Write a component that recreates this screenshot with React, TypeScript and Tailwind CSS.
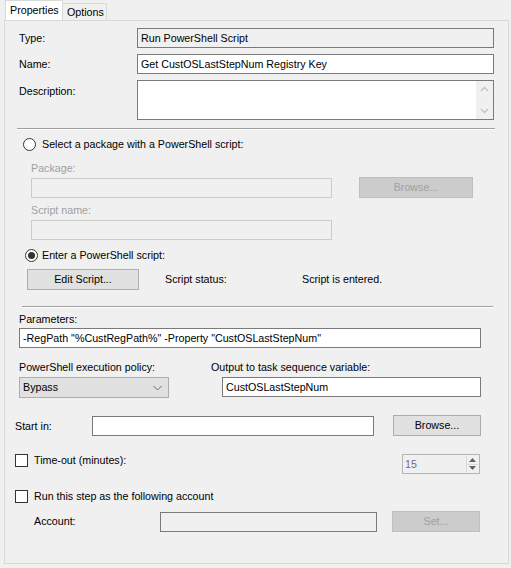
const FONT = { fontFamily: '"Liberation Sans", Arial, sans-serif' };

const Box = ({ w, h = 20, value, className = '' }: { w: number; h?: number; value?: string; className?: string }) => (
  <div
    className={`flex items-center border px-[3px] leading-none whitespace-nowrap ${className}`}
    style={{ width: w, height: h }}
  >
    {value}
  </div>
);

const Button = ({ w, label, disabled }: { w: number; label: string; disabled?: boolean }) => (
  <div
    className={`flex h-[21px] items-center justify-center border leading-none ${
      disabled ? 'border-[#bfbfbf] bg-[#cccccc] text-[#a0a0a0]' : 'border-[#adadad] bg-[#e1e1e1] text-black'
    }`}
    style={{ width: w }}
  >
    {label}
  </div>
);

const Radio = ({ checked }: { checked?: boolean }) => (
  <div className="flex h-[13px] w-[13px] items-center justify-center rounded-full border border-[#333333] bg-white">
    {checked && <div className="h-[7px] w-[7px] rounded-full bg-[#333333]" />}
  </div>
);

const Check = () => <div className="h-[13px] w-[13px] border border-[#333333] bg-white" />;

const Separator = ({ ml, w }: { ml: number; w: number }) => (
  <div className="flex flex-col" style={{ marginLeft: ml, width: w }}>
    <div className="h-px bg-[#a0a0a0]" />
    <div className="h-px bg-white" />
  </div>
);

export default function App() {
  return (
    <div className="h-[568px] w-[511px] overflow-hidden bg-[#f0f0f0] text-[10.7px] text-black" style={FONT}>
      {/* tabs */}
      <div className="flex h-[20px] items-end pl-[5px]">
        <div className="flex h-[20px] w-[58px] items-center border-x border-t border-[#d9d9d9] bg-white pl-[4px] leading-none">
          Properties
        </div>
        <div className="flex h-[17px] w-[44px] items-center border-r border-t border-[#d9d9d9] pl-[4px] leading-none">
          Options
        </div>
      </div>

      {/* panel */}
      <div className="ml-[4px] flex h-[544px] w-[505px] flex-col border border-[#d9d9d9]">
        <div className="mt-[7px] ml-[14px] flex h-[20px] items-center">
          <div className="w-[118px]">Type:</div>
          <Box w={357} value="Run PowerShell Script" className="border-[#7a7a7a] bg-[#f0f0f0]" />
        </div>
        <div className="mt-[6px] ml-[14px] flex h-[20px] items-center">
          <div className="w-[118px]">Name:</div>
          <Box w={357} value="Get CustOSLastStepNum Registry Key" className="border-[#7a7a7a] bg-white" />
        </div>
        <div className="mt-[6px] ml-[14px] flex h-[40px] items-start">
          <div className="w-[118px] pt-[3px]">Description:</div>
          <div className="flex h-[40px] w-[357px] justify-end border border-[#7a7a7a] bg-white">
            <div className="flex h-full w-[17px] flex-col items-center justify-between bg-[#f0f0f0] py-[5px]">
              <svg width="9" height="6" viewBox="0 0 9 6">
                <path d="M1 5 L4.5 1.5 L8 5" fill="none" stroke="#c2c2c2" strokeWidth="1.3" />
              </svg>
              <svg width="9" height="6" viewBox="0 0 9 6">
                <path d="M1 1 L4.5 4.5 L8 1" fill="none" stroke="#c2c2c2" strokeWidth="1.3" />
              </svg>
            </div>
          </div>
        </div>

        <div className="mt-[8px]">
          <Separator ml={12} w={478} />
        </div>

        <div className="mt-[8px] ml-[18px] flex h-[13px] items-center gap-[6px]">
          <Radio />
          <span className="leading-none">Select a package with a PowerShell script:</span>
        </div>
        <div className="mt-[10px] ml-[26px] h-[14px] leading-[14px] text-[#a0a0a0]">Package:</div>
        <div className="mt-[2px] ml-[26px] flex h-[21px] items-start">
          <Box w={301} className="mt-px border-[#cccccc] bg-[#f0f0f0]" />
          <div className="ml-[27px]">
            <Button w={114} label="Browse..." disabled />
          </div>
        </div>
        <div className="mt-[5px] ml-[26px] h-[14px] leading-[14px] text-[#a0a0a0]">Script name:</div>
        <div className="mt-[3px] ml-[26px]">
          <Box w={301} className="border-[#cccccc] bg-[#f0f0f0]" />
        </div>

        <div className="mt-[9px] ml-[20px] flex h-[13px] items-center gap-[4px]">
          <Radio checked />
          <span className="leading-none">Enter a PowerShell script:</span>
        </div>
        <div className="mt-[7px] ml-[22px] flex h-[21px] items-center">
          <Button w={112} label="Edit Script..." />
          <span className="ml-[26px] w-[137px]">Script status:</span>
          <span>Script is entered.</span>
        </div>

        <div className="mt-[16px]">
          <Separator ml={17} w={471} />
        </div>

        <div className="mt-[4px] ml-[14px] h-[14px] leading-[14px]">Parameters:</div>
        <div className="mt-[2px] ml-[14px]">
          <Box w={462} value={'-RegPath "%CustRegPath%" -Property "CustOSLastStepNum"'} className="border-[#7a7a7a] bg-white" />
        </div>

        <div className="mt-[12px] ml-[14px] flex h-[14px] leading-[14px]">
          <span className="w-[192px]">PowerShell execution policy:</span>
          <span>Output to task sequence variable:</span>
        </div>
        <div className="mt-[3px] ml-[14px] flex h-[21px] items-start">
          <div className="flex h-[21px] w-[150px] items-center justify-between border border-[#adadad] bg-[#e1e1e1] pr-[6px] pl-[3px] leading-none">
            <span>Bypass</span>
            <svg width="9" height="6" viewBox="0 0 9 6">
              <path d="M0.5 1 L4.5 5 L8.5 1" fill="none" stroke="#6d6d6d" strokeWidth="1" />
            </svg>
          </div>
          <Box w={259} value="CustOSLastStepNum" className="ml-[53px] border-[#7a7a7a] bg-white" />
        </div>

        <div className="mt-[17px] ml-[10px] flex h-[21px] items-start">
          <span className="w-[77px] pt-[4px] leading-[14px]">Start in:</span>
          <Box w={282} className="mt-px border-[#7a7a7a] bg-white" />
          <div className="ml-[19px]">
            <Button w={88} label="Browse..." />
          </div>
        </div>

        <div className="mt-[18px] ml-[10px] flex h-[20px] items-start">
          <Check />
          <span className="ml-[6px] w-[368px] leading-[13px]">Time-out (minutes):</span>
          <div className="flex h-[20px] w-[78px] items-center justify-between border border-[#b5b5b5] bg-[#f0f0f0] pr-[1px] pl-[2px]">
            <span className="leading-none text-[#6d6d84]">15</span>
            <div className="flex h-[16px] w-[12px] flex-col border-l border-[#d9d9d9]">
              <div className="flex flex-1 items-center justify-center border-b border-[#d9d9d9]">
                <svg width="7" height="4" viewBox="0 0 7 4">
                  <path d="M0 4 L3.5 0 L7 4 Z" fill="#606060" />
                </svg>
              </div>
              <div className="flex flex-1 items-center justify-center">
                <svg width="7" height="4" viewBox="0 0 7 4">
                  <path d="M0 0 L3.5 4 L7 0 Z" fill="#606060" />
                </svg>
              </div>
            </div>
          </div>
        </div>

        <div className="mt-[16px] ml-[10px] flex h-[13px] items-center">
          <Check />
          <span className="ml-[6px] leading-none">Run this step as the following account</span>
        </div>
        <div className="mt-[8px] ml-[29px] flex h-[21px] items-start">
          <span className="w-[126px] pt-[3px] leading-[14px]">Account:</span>
          <Box w={217} className="mt-px border-[#7a7a7a] bg-[#f0f0f0]" />
          <div className="ml-[15px]">
            <Button w={88} label="Set..." disabled />
          </div>
        </div>
      </div>
    </div>
  );
}
